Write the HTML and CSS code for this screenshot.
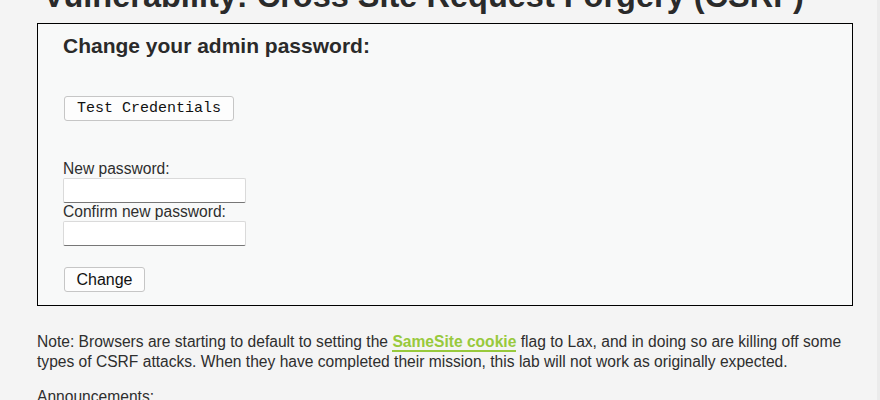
FILE: index.html
```html
<!DOCTYPE html>
<html>
<head>
<link rel="stylesheet" href="styles.css">
</head>
<body>
<div class="main">
  <h1>Vulnerability: Cross Site Request Forgery (CSRF)</h1>

  <div class="vulnerable_code_area">
    <h3>Change your admin password:</h3>
    <div class="test-row">
      <button class="test-btn" type="button">Test Credentials</button>
    </div>
    <form action="#" method="get">
      <label class="field-label" for="password_new">New password:</label>
      <input type="password" id="password_new" name="password_new" class="pw">
      <label class="field-label" for="password_conf">Confirm new password:</label>
      <input type="password" id="password_conf" name="password_conf" class="pw">
      <button class="change-btn" type="submit" name="Change">Change</button>
    </form>
  </div>

  <p class="note">Note: Browsers are starting to default to setting the <a href="#">SameSite cookie</a> flag to Lax, and in doing so are killing off some types of CSRF attacks. When they have completed their mission, this lab will not work as originally expected.</p>

  <p class="note">Announcements:</p>
</div>
</body>
</html>
```

FILE: styles.css
```css
html {
  background: #ebebeb;
}

body {
  margin: 0 3px 0 0;
  min-height: 400px;
  background: #f4f4f4;
  font-family: "Liberation Sans", Arial, sans-serif;
  font-size: 15.6px;
  color: #2e2e2e;
  overflow: hidden;
}

.main {
  padding: 0 24px 0 37px;
}

h1 {
  margin: -24px 0 7px 6px;
  font-size: 32.5px;
  line-height: 40px;
  font-weight: bold;
  color: #2a2a2a;
  white-space: nowrap;
}

.vulnerable_code_area {
  border: 1px solid #000;
  background: #f8f9f9;
  padding: 10px 25px 13px;
}

.vulnerable_code_area h3 {
  margin: 0;
  font-size: 21px;
  line-height: 24px;
  color: #2a2a2a;
}

.test-row {
  margin-top: 38px;
}

button {
  box-sizing: border-box;
  background: #fdfdfd;
  border: 1px solid #c6c6c6;
  border-radius: 3px;
  color: #111;
  cursor: pointer;
  margin: 0 0 0 1px;
  white-space: nowrap;
}

.test-btn {
  font-family: "Liberation Mono", "Courier New", monospace;
  font-size: 15px;
  line-height: 17px;
  padding: 3px 0;
  width: 170px;
  height: 25px;
}

form {
  margin-top: 39px;
}

.field-label {
  display: block;
  line-height: 18px;
}

.pw {
  display: block;
  box-sizing: border-box;
  width: 183px;
  height: 25px;
  margin: 0;
  background: #fff;
  border: 1px solid #dadada;
  border-bottom-color: #777;
  border-radius: 2px;
}

.change-btn {
  margin-top: 21px;
  font-family: "Liberation Sans", Arial, sans-serif;
  font-size: 16px;
  line-height: 19px;
  padding: 2px 0;
  width: 81px;
  height: 25px;
}

.note {
  margin: 26px 0 16px;
  line-height: 19.5px;
}

.note + .note {
  margin-top: 16px;
}

.note a {
  color: #98c93c;
  font-weight: bold;
  text-decoration: none;
  border-bottom: 2px solid #98c93c;
}
```
